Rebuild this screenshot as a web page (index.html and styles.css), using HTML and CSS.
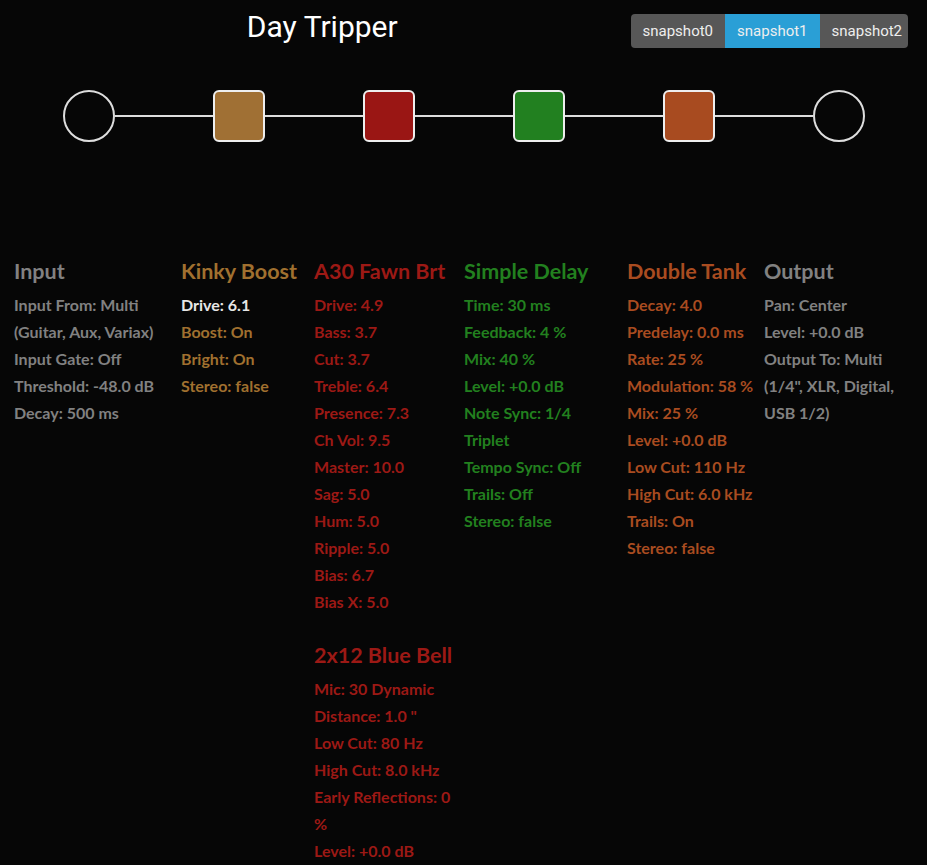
FILE: index.html
```html
<!DOCTYPE html>
<html>
<head>
<meta charset="utf-8">
<link rel="stylesheet" href="styles.css">
</head>
<body>
<header class="top">
  <div class="title-wrap"><h1 class="title">Day Tripper</h1></div>
  <div class="snapshots">
    <button class="snap">snapshot0</button>
    <button class="snap active">snapshot1</button>
    <button class="snap">snapshot2</button>
  </div>
</header>

<div class="chain">
  <div class="node io"></div>
  <div class="wire"></div>
  <div class="node block c-boost"></div>
  <div class="wire"></div>
  <div class="node block c-amp"></div>
  <div class="wire"></div>
  <div class="node block c-delay"></div>
  <div class="wire"></div>
  <div class="node block c-verb"></div>
  <div class="wire"></div>
  <div class="node io"></div>
</div>

<div class="cols">
  <div class="col col-input t-gray">
    <h3 class="bname">Input</h3>
    <div class="p">Input From: Multi (Guitar, Aux, Variax)</div>
    <div class="p">Input Gate: Off</div>
    <div class="p">Threshold: -48.0 dB</div>
    <div class="p">Decay: 500 ms</div>
  </div>
  <div class="col col-boost t-boost">
    <h3 class="bname">Kinky Boost</h3>
    <div class="p hl">Drive: 6.1</div>
    <div class="p">Boost: On</div>
    <div class="p">Bright: On</div>
    <div class="p">Stereo: false</div>
  </div>
  <div class="col col-amp t-amp">
    <h3 class="bname">A30 Fawn Brt</h3>
    <div class="p">Drive: 4.9</div>
    <div class="p">Bass: 3.7</div>
    <div class="p">Cut: 3.7</div>
    <div class="p">Treble: 6.4</div>
    <div class="p">Presence: 7.3</div>
    <div class="p">Ch Vol: 9.5</div>
    <div class="p">Master: 10.0</div>
    <div class="p">Sag: 5.0</div>
    <div class="p">Hum: 5.0</div>
    <div class="p">Ripple: 5.0</div>
    <div class="p">Bias: 6.7</div>
    <div class="p">Bias X: 5.0</div>
    <h3 class="bname second">2x12 Blue Bell</h3>
    <div class="p">Mic: 30 Dynamic</div>
    <div class="p">Distance: 1.0 "</div>
    <div class="p">Low Cut: 80 Hz</div>
    <div class="p">High Cut: 8.0 kHz</div>
    <div class="p">Early Reflections: 0 %</div>
    <div class="p">Level: +0.0 dB</div>
  </div>
  <div class="col col-delay t-delay">
    <h3 class="bname">Simple Delay</h3>
    <div class="p">Time: 30 ms</div>
    <div class="p">Feedback: 4 %</div>
    <div class="p">Mix: 40 %</div>
    <div class="p">Level: +0.0 dB</div>
    <div class="p">Note Sync: 1/4 Triplet</div>
    <div class="p">Tempo Sync: Off</div>
    <div class="p">Trails: Off</div>
    <div class="p">Stereo: false</div>
  </div>
  <div class="col col-verb t-verb">
    <h3 class="bname">Double Tank</h3>
    <div class="p">Decay: 4.0</div>
    <div class="p">Predelay: 0.0 ms</div>
    <div class="p">Rate: 25 %</div>
    <div class="p">Modulation: 58 %</div>
    <div class="p">Mix: 25 %</div>
    <div class="p">Level: +0.0 dB</div>
    <div class="p">Low Cut: 110 Hz</div>
    <div class="p">High Cut: 6.0 kHz</div>
    <div class="p">Trails: On</div>
    <div class="p">Stereo: false</div>
  </div>
  <div class="col col-output t-gray">
    <h3 class="bname">Output</h3>
    <div class="p">Pan: Center</div>
    <div class="p">Level: +0.0 dB</div>
    <div class="p">Output To: Multi (1/4", XLR, Digital, USB 1/2)</div>
  </div>
</div>
</body>
</html>
```
FILE: styles.css
```css
html, body {
  margin: 0;
  padding: 0;
  background: #060606;
  height: 100%;
}
body {
  font-family: "Lato", "Noto Sans", sans-serif;
  color: #818181;
  overflow: hidden;
}

.top {
  display: flex;
  align-items: flex-start;
  padding-top: 14px;
  height: 34px;
}
.title-wrap {
  width: 630px;
  padding-left: 14px;
  text-align: center;
}
.title {
  margin: 0;
  font-family: "Roboto", sans-serif;
  font-weight: 400;
  font-size: 30px;
  line-height: 26px;
  color: #ffffff;
}
.snapshots {
  display: flex;
  margin-left: auto;
  margin-right: 19px;
  border-radius: 4px;
  overflow: hidden;
}
.snap {
  border: 0;
  margin: 0;
  height: 34px;
  padding: 0 12px;
  background: #575757;
  color: #eeeeee;
  font-family: "Roboto", sans-serif;
  font-size: 15px;
}
.snap.active {
  background: #2a9fd6;
}

.chain {
  display: flex;
  align-items: center;
  margin-top: 42px;
  padding-left: 63px;
}
.node {
  box-sizing: border-box;
  width: 52px;
  height: 52px;
  flex: none;
}
.io {
  border: 2px solid #dddddd;
  border-radius: 50%;
}
.block {
  border: 2px solid #eeeeee;
  border-radius: 6px;
}
.wire {
  width: 98px;
  height: 2px;
  background: #dddddd;
  flex: none;
}
.c-boost { background: #a07034; }
.c-amp { background: #9a1614; }
.c-delay { background: #228020; }
.c-verb { background: #a84b20; }

.cols {
  display: flex;
  align-items: flex-start;
  padding-left: 14px;
  margin-top: 117px;
}
.col { flex: none; }
.col-input { width: 167px; }
.col-input .p { width: 150px; }
.col-boost { width: 133px; }
.col-amp { width: 150px; }
.col-amp .p { width: 140px; }
.col-delay { width: 163px; }
.col-delay .p { width: 130px; }
.col-verb { width: 137px; }
.col-output { width: 150px; }

.bname {
  margin: 0 0 8px;
  font-size: 21.5px;
  line-height: 24px;
  font-weight: 700;
  white-space: nowrap;
}
.bname.second {
  margin-top: 28px;
}
.p {
  font-size: 16px;
  line-height: 27px;
  font-weight: 700;
}

.t-gray { color: #818181; }
.t-boost { color: #a0702f; }
.t-amp { color: #9c1915; }
.t-delay { color: #22801f; }
.t-verb { color: #a94c20; }
.p.hl { color: #e6e6e6; }
```
